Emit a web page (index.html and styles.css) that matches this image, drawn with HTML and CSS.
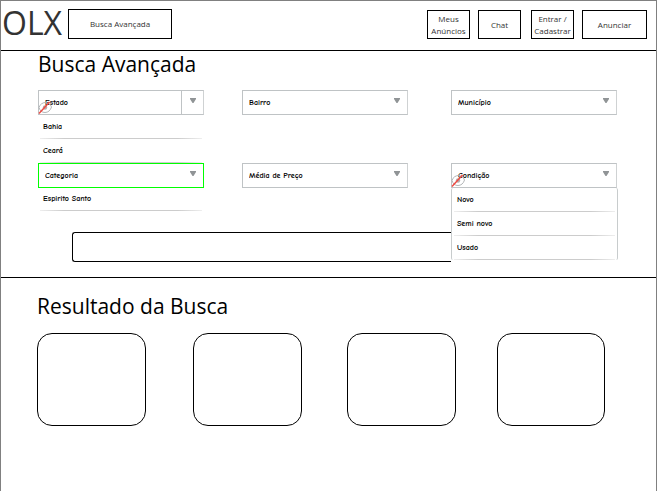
FILE: index.html
```html
<!DOCTYPE html>
<html lang="pt-BR">
<head>
<meta charset="utf-8">
<meta name="viewport" content="width=device-width, initial-scale=1">
<title>OLX</title>
<link rel="stylesheet" href="styles.css">
</head>
<body>
<svg class="defs" aria-hidden="true">
  <symbol id="caret" viewBox="0 0 6 5"><path d="M0 0H6V1L3.500 5H2.500L0 1Z" fill="#909496"/></symbol>
  <symbol id="hidden-eye" viewBox="0 0 15 15">
    <path d="M1 7.500C2 4 5 2.500 7.500 2.500S12.500 4 13.500 7C12.500 10.500 10 12.500 7 12.500S2 11 1 7.500Z" fill="none" stroke="#b3b6b8"/>
    <circle cx="7" cy="7.500" r="2.200" fill="#b4aeae"/>
    <path d="M1 13.500L11.500 2" stroke="#ee4a42" stroke-width="1.500"/>
  </symbol>
</svg>
<header class="topbar">
  <a class="logo" href="#">OLX</a>
  <button class="nav-button nav-search" type="button">Busca Avançada</button>
  <nav class="actions">
    <button class="nav-button" type="button">Meus Anúncios</button>
    <button class="nav-button" type="button">Chat</button>
    <button class="nav-button" type="button">Entrar / Cadastrar</button>
    <button class="nav-button nav-wide" type="button">Anunciar</button>
  </nav>
</header>
<main>
  <section class="search">
    <h1 class="title">Busca Avançada</h1>
    <form class="filters">
      <div class="field col-1 split">
        <select class="select" aria-label="Estado"><option>Estado</option></select>
        <svg class="caret"><use href="#caret"/></svg>
        <svg class="eye"><use href="#hidden-eye"/></svg>
        <ul class="menu menu-open">
          <li>Bahia</li>
          <li>Ceará</li>
          <li></li>
          <li>Espirito Santo</li>
        </ul>
      </div>
      <div class="field col-2">
        <select class="select" aria-label="Bairro"><option>Bairro</option></select>
        <svg class="caret"><use href="#caret"/></svg>
      </div>
      <div class="field col-3">
        <select class="select" aria-label="Município"><option>Município</option></select>
        <svg class="caret"><use href="#caret"/></svg>
      </div>
      <div class="field col-1 front">
        <select class="select active" aria-label="Categoria"><option>Categoria</option></select>
        <svg class="caret"><use href="#caret"/></svg>
      </div>
      <div class="field col-2">
        <select class="select" aria-label="Média de Preço"><option>Média de Preço</option></select>
        <svg class="caret"><use href="#caret"/></svg>
      </div>
      <div class="field col-3">
        <select class="select" aria-label="Condição"><option>Condição</option></select>
        <svg class="caret"><use href="#caret"/></svg>
        <svg class="eye"><use href="#hidden-eye"/></svg>
        <ul class="menu menu-boxed">
          <li>Novo</li>
          <li>Semi novo</li>
          <li>Usado</li>
        </ul>
      </div>
      <input class="query" type="text" aria-label="Busca">
    </form>
  </section>
  <section class="results">
    <h2 class="title">Resultado da Busca</h2>
    <div class="cards">
      <article class="card"></article>
      <article class="card"></article>
      <article class="card"></article>
      <article class="card"></article>
    </div>
  </section>
</main>
</body>
</html>
```
FILE: styles.css
```css
* { box-sizing: border-box; }

body {
  margin: 0;
  min-height: 100vh;
  border: 1px solid #808080;
  border-bottom: 0;
  background: #fff;
  color: #000;
  font-family: "Open Sans", sans-serif;
}

.defs { position: absolute; width: 0; height: 0; }

.topbar {
  display: flex;
  align-items: center;
  height: 50px;
  padding: 0 9px 2px 1px;
  border-bottom: 1px solid #000;
}

.logo {
  padding-bottom: 4px;
  color: #333;
  font-size: 32px;
  line-height: 42px;
  text-decoration: none;
}

.nav-button {
  width: 43px;
  height: 29px;
  padding: 0;
  border: 1px solid #000;
  background: #fff;
  color: #333;
  font-family: inherit;
  font-size: 8px;
  line-height: 12px;
}

.nav-search {
  width: 104px;
  height: 30px;
  margin: 0 0 2px 6px;
}

.nav-wide { width: 65px; }

.actions {
  display: flex;
  gap: 8px;
  margin-left: auto;
}

.actions .nav-button:nth-child(2) { margin-right: 2px; }

.search {
  padding: 0 39px 15px 37px;
  border-bottom: 1px solid #000;
}

.title {
  margin: 0;
  font-size: 21px;
  font-weight: 400;
  line-height: 26px;
}

.filters {
  display: grid;
  grid-template-columns: 1fr 38px 1fr 43px 1fr;
  row-gap: 48px;
  padding-top: 13px;
}

.field { position: relative; height: 25px; }
.col-1 { grid-column: 1; }
.col-2 { grid-column: 3; }
.col-3 { grid-column: 5; z-index: 1; }
.front { z-index: 2; }

.select {
  display: block;
  width: 100%;
  height: 25px;
  padding: 0 6px;
  border: 1px solid #bfc3c5;
  border-right-color: #cfd2d3;
  border-radius: 0;
  background: #fff;
  color: #000;
  font-family: "Comic Sans MS", "Comic Neue", "Open Sans", sans-serif;
  font-size: 8px;
  font-weight: 700;
  appearance: none;
}

.select.active { border-color: #0f0; }

.split::after {
  content: "";
  position: absolute;
  top: 0;
  right: 22px;
  height: 25px;
  border-left: 1px solid #bfc3c5;
}

.caret {
  position: absolute;
  top: 8px;
  right: 8px;
  width: 6px;
  height: 5px;
}

.eye {
  position: absolute;
  top: 10px;
  left: 0;
  width: 15px;
  height: 15px;
}

.menu {
  position: absolute;
  top: 25px;
  left: 0;
  right: 0;
  margin: 0;
  padding: 0 2px;
  list-style: none;
  background: #fff;
  font-family: "Comic Sans MS", "Comic Neue", "Open Sans", sans-serif;
  font-size: 8px;
  font-weight: 700;
  line-height: 24px;
}

.menu li {
  height: 24px;
  padding-left: 3px;
  background: linear-gradient(to right, #eee, #ccc 15%, #ccc 85%, #eee) bottom / 100% 1px no-repeat;
}

.menu-boxed {
  right: -1px;
  border: solid #c8cccd;
  border-width: 0 1px;
  border-radius: 2px;
}

.query {
  grid-column: 1 / 5;
  height: 30px;
  margin: -4px 0 0 34px;
  padding: 0 8px;
  border: 1px solid #000;
  border-right: 0;
  border-radius: 3px 0 0 3px;
  background: #fff;
  font: 12px "Open Sans", sans-serif;
}

.results { padding: 15px 51px 24px 36px; }

.cards {
  display: grid;
  grid-template-columns: 109fr 47fr 109fr 45fr 109fr 41fr 108fr;
  margin-top: 14px;
}

.card {
  height: 93px;
  border: 1px solid #000;
  border-radius: 15px;
}

.card:nth-child(2) { grid-column: 3; }
.card:nth-child(3) { grid-column: 5; }
.card:nth-child(4) { grid-column: 7; }
```
